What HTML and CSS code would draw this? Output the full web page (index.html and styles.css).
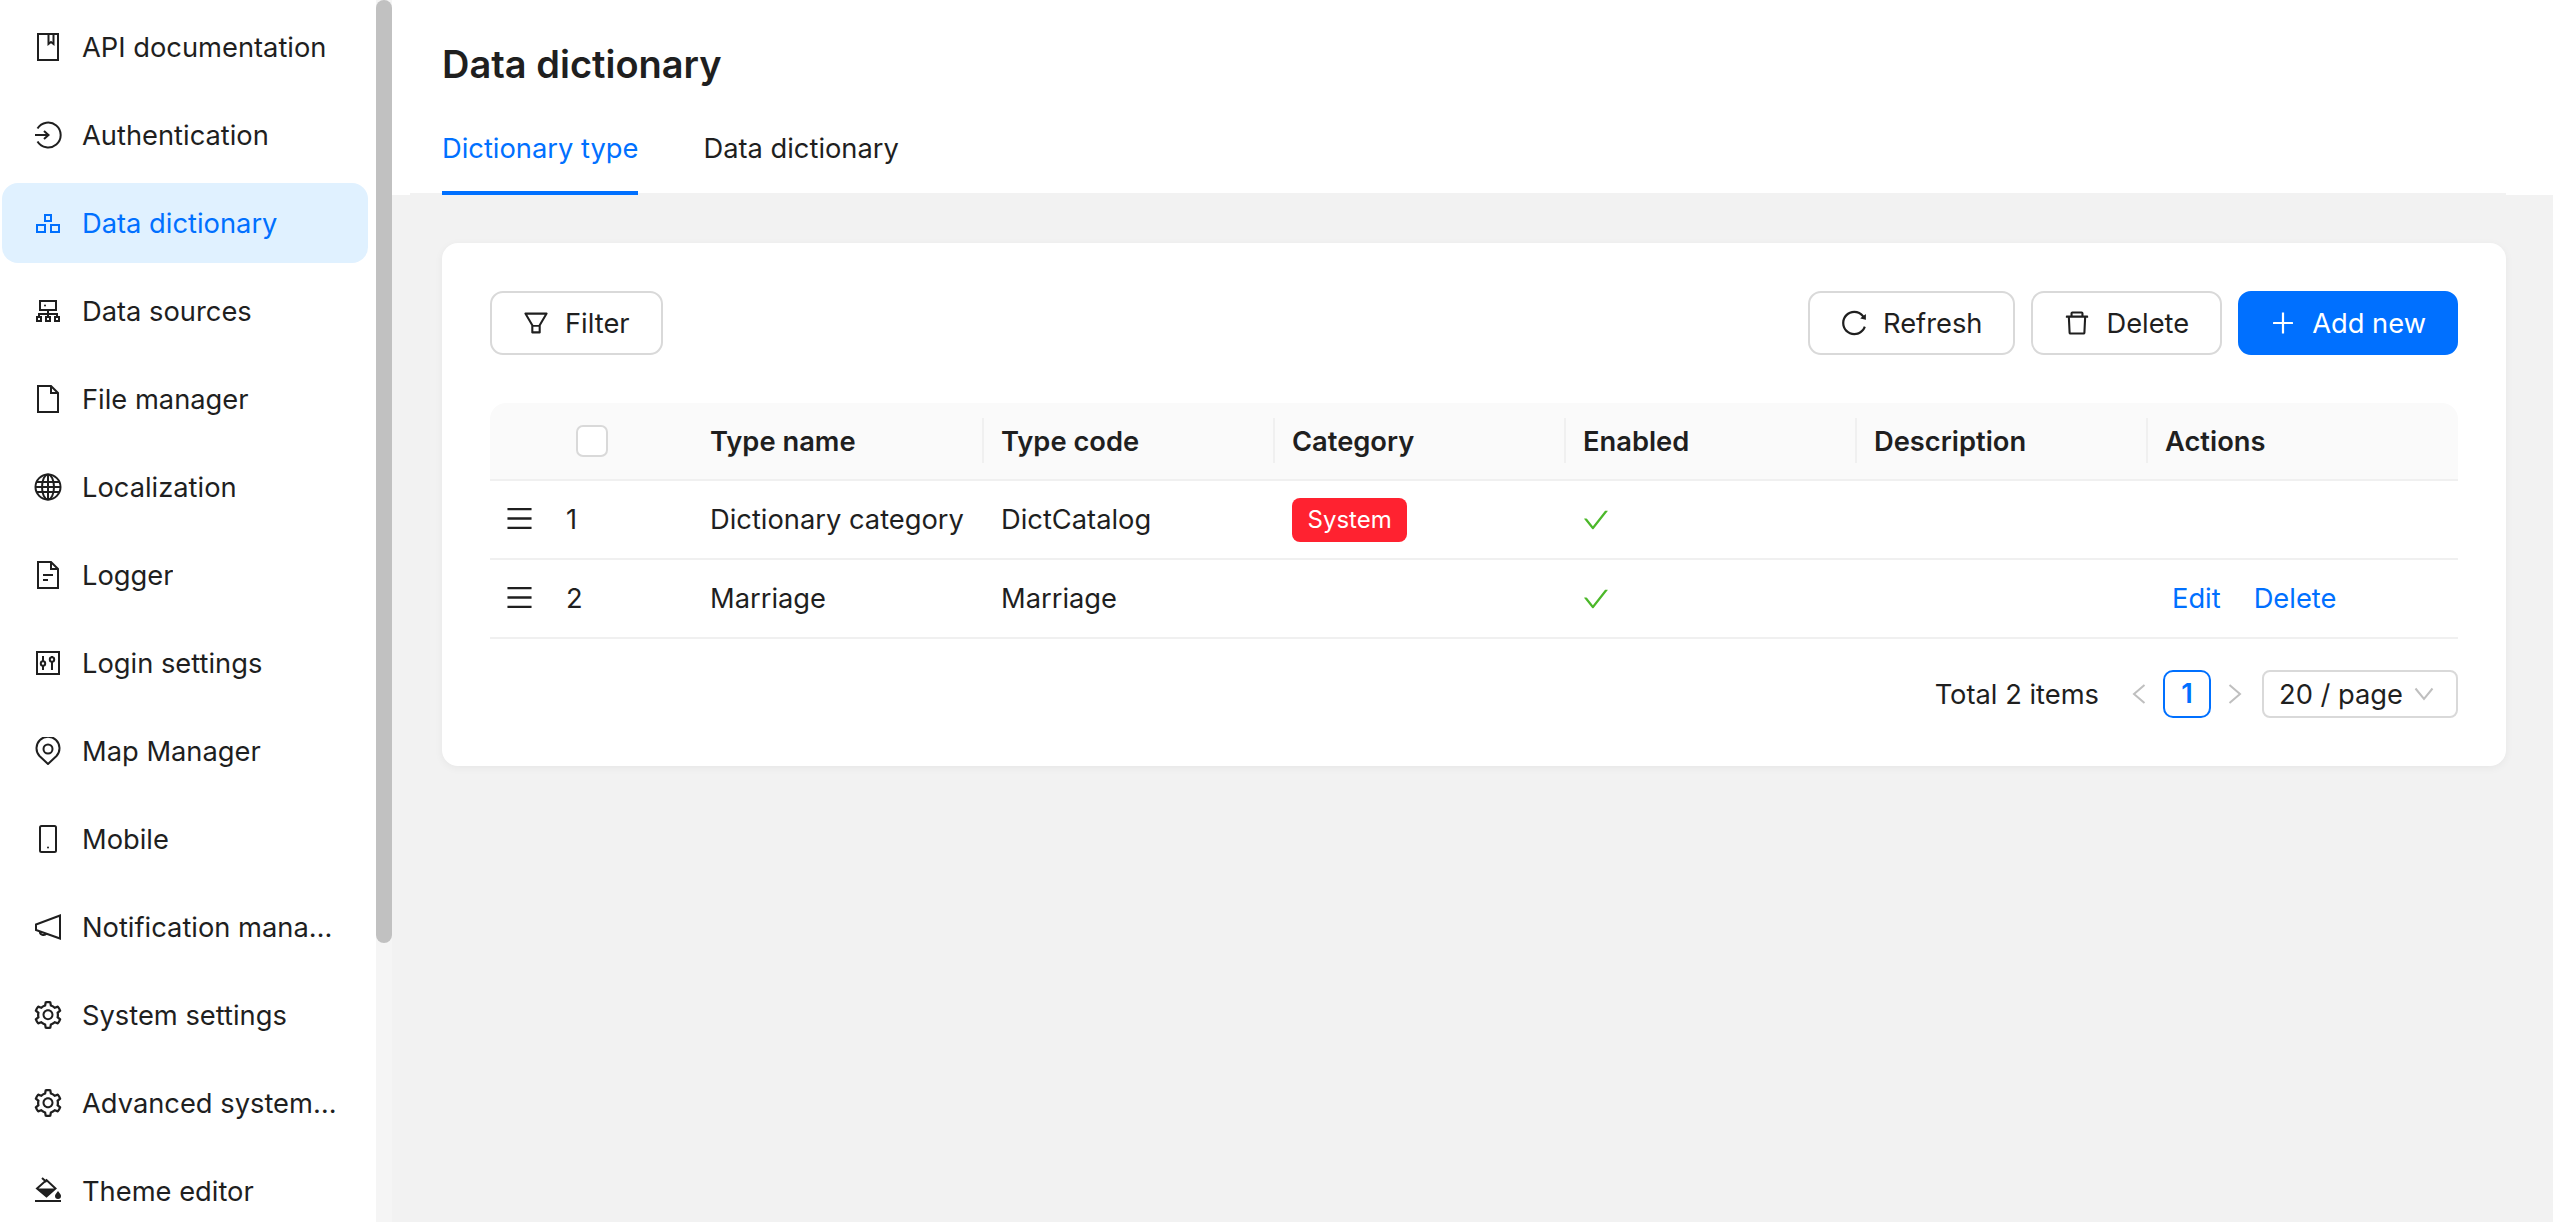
FILE: index.html
```html
<!DOCTYPE html>
<html lang="en">
<head>
    <meta charset="UTF-8">
    <meta name="viewport" content="width=device-width, initial-scale=1.0">
    <title>Data dictionary</title>
    <link rel="stylesheet" href="styles.css">
</head>
<body>
    <aside class="sidebar">
        <nav class="menu">
            <a class="menu-item">
                <svg class="menu-icon" viewBox="0 0 28 28"><rect x="4" y="1" width="20" height="26"/><path d="M14.5 1v10l2.5-2 2.5 2V1"/></svg>
                <span class="menu-label">API documentation</span>
            </a>
            <a class="menu-item">
                <svg class="menu-icon" viewBox="0 0 28 28"><path d="M3.5 7.5A12.5 12.5 0 1 1 3.5 20.500M1 14h13M10 10l4.500 4-4.500 4"/></svg>
                <span class="menu-label">Authentication</span>
            </a>
            <a class="menu-item active">
                <svg class="menu-icon" viewBox="0 0 28 28"><rect x="11" y="6" width="6" height="6"/><rect x="3" y="16" width="8" height="7"/><rect x="17" y="16" width="8" height="7"/></svg>
                <span class="menu-label">Data dictionary</span>
            </a>
            <a class="menu-item">
                <svg class="menu-icon" viewBox="0 0 28 28"><rect x="6" y="4" width="16" height="9"/><path d="M14 13v4M5 20v-3h18v3M14 17v3"/><rect x="3" y="20" width="4" height="4"/><rect x="12" y="20" width="4" height="4"/><rect x="21" y="20" width="4" height="4"/><circle class="solid" cx="11" cy="8.500" r="1"/></svg>
                <span class="menu-label">Data sources</span>
            </a>
            <a class="menu-item">
                <svg class="menu-icon" viewBox="0 0 28 28"><path d="M4 1h13l7 7v19H4zM17 1v7h7"/></svg>
                <span class="menu-label">File manager</span>
            </a>
            <a class="menu-item">
                <svg class="menu-icon" viewBox="0 0 28 28"><circle cx="14" cy="14" r="12.500"/><ellipse cx="14" cy="14" rx="6" ry="12.500"/><path d="M14 1.500v25M2.500 9h23M1.500 14h25M2.500 19h23"/></svg>
                <span class="menu-label">Localization</span>
            </a>
            <a class="menu-item">
                <svg class="menu-icon" viewBox="0 0 28 28"><path d="M4 1h13l7 7v19H4zM17 1v7h7M9 14h10M9 19h5"/></svg>
                <span class="menu-label">Logger</span>
            </a>
            <a class="menu-item">
                <svg class="menu-icon" viewBox="0 0 28 28"><rect x="3" y="3" width="22" height="22"/><path d="M9 7v5M9 17v4M18 7v1.500M18 13v8"/><circle cx="9" cy="14.500" r="2.200"/><circle cx="18" cy="10.500" r="2.200"/></svg>
                <span class="menu-label">Login settings</span>
            </a>
            <a class="menu-item">
                <svg class="menu-icon" viewBox="0 0 28 28"><path d="M14 27l-8.500-8A11.500 11.500 0 1 1 22.500 19z"/><circle cx="14" cy="12" r="4.500"/></svg>
                <span class="menu-label">Map Manager</span>
            </a>
            <a class="menu-item">
                <svg class="menu-icon" viewBox="0 0 28 28"><rect x="6" y="1" width="16" height="26" rx="1.500"/><circle class="solid" cx="14" cy="22.500" r="1"/></svg>
                <span class="menu-label">Mobile</span>
            </a>
            <a class="menu-item">
                <svg class="menu-icon" viewBox="0 0 28 28"><path d="M26 2.500v23L2 17v-5.500zM6 18.500a3.500 3 0 0 0 6.500 2"/></svg>
                <span class="menu-label">Notification manager</span>
            </a>
            <a class="menu-item">
                <svg class="ant-icon" viewBox="64 64 896 896"><path d="M924.800 625.700l-65.500-56c3.100-19 4.700-38.400 4.700-57.800s-1.600-38.800-4.700-57.800l65.500-56a32.030 32.030 0 0 0 9.300-35.200l-.9-2.600a443.740 443.740 0 0 0-79.700-137.900l-1.800-2.100a32.120 32.120 0 0 0-35.100-9.500l-81.300 28.900c-30-24.600-63.500-44-99.700-57.600l-15.700-85a32.050 32.050 0 0 0-25.800-25.700l-2.700-.5c-52.100-9.400-106.900-9.400-159 0l-2.700.5a32.050 32.050 0 0 0-25.800 25.700l-15.800 85.400a351.860 351.860 0 0 0-99 57.400l-81.900-29.100a32 32 0 0 0-35.100 9.500l-1.800 2.100a446.020 446.020 0 0 0-79.700 137.900l-.9 2.600c-4.500 12.500-.8 26.500 9.300 35.200l66.300 56.600c-3.100 18.800-4.600 38-4.600 57.100 0 19.200 1.500 38.400 4.600 57.100L99 625.500a32.030 32.030 0 0 0-9.300 35.200l.9 2.600c18.100 50.400 44.900 96.900 79.700 137.900l1.800 2.100a32.120 32.120 0 0 0 35.100 9.500l81.900-29.100c29.800 24.500 63.100 43.900 99 57.400l15.800 85.400a32.050 32.050 0 0 0 25.800 25.700l2.700.5a449.400 449.400 0 0 0 159 0l2.700-.5a32.050 32.050 0 0 0 25.800-25.700l15.700-85a350 350 0 0 0 99.700-57.600l81.300 28.900a32 32 0 0 0 35.100-9.500l1.800-2.100c34.800-41.100 61.600-87.500 79.700-137.900l.9-2.600c4.500-12.300.8-26.300-9.300-35zM788.300 465.900c2.500 15.100 3.800 30.600 3.800 46.100s-1.300 31-3.800 46.100l-6.600 40.100 74.700 63.900a370.030 370.030 0 0 1-42.600 73.600L721 702.800l-31.400 25.800c-23.900 19.600-50.500 35-79.300 45.800l-38.100 14.300-17.900 97a377.500 377.500 0 0 1-85 0l-17.900-97.200-37.800-14.500c-28.500-10.800-55-26.200-78.700-45.700l-31.400-25.900-93.400 33.200c-17-22.900-31.200-47.600-42.600-73.600l75.500-64.500-6.500-40c-2.400-14.900-3.700-30.300-3.700-45.500 0-15.300 1.200-30.600 3.700-45.500l6.500-40-75.500-64.500c11.300-26.100 25.600-50.700 42.600-73.600l93.400 33.200 31.400-25.900c23.700-19.500 50.200-34.900 78.700-45.700l37.900-14.300 17.900-97.200c28.100-3.200 56.800-3.200 85 0l17.900 97 38.100 14.300c28.700 10.800 55.400 26.200 79.300 45.800l31.400 25.800 92.800-32.900c17 22.900 31.200 47.600 42.600 73.600L781.800 426l6.500 39.900zM512 326c-97.200 0-176 78.800-176 176s78.800 176 176 176 176-78.800 176-176-78.800-176-176-176zm79.200 255.200A111.600 111.600 0 0 1 512 614c-29.900 0-58-11.700-79.200-32.800A111.600 111.600 0 0 1 400 502c0-29.900 11.700-58 32.800-79.200C454 401.600 482.100 390 512 390c29.900 0 58 11.600 79.200 32.800A111.600 111.600 0 0 1 624 502c0 29.900-11.700 58-32.800 79.200z"/></svg>
                <span class="menu-label">System settings</span>
            </a>
            <a class="menu-item">
                <svg class="ant-icon" viewBox="64 64 896 896"><path d="M924.800 625.700l-65.500-56c3.100-19 4.700-38.400 4.700-57.800s-1.600-38.800-4.700-57.800l65.500-56a32.030 32.030 0 0 0 9.300-35.200l-.9-2.600a443.740 443.740 0 0 0-79.700-137.900l-1.800-2.100a32.120 32.120 0 0 0-35.100-9.500l-81.300 28.900c-30-24.600-63.500-44-99.700-57.600l-15.700-85a32.050 32.050 0 0 0-25.800-25.700l-2.700-.5c-52.100-9.400-106.900-9.400-159 0l-2.700.5a32.050 32.050 0 0 0-25.800 25.700l-15.800 85.400a351.860 351.860 0 0 0-99 57.400l-81.900-29.100a32 32 0 0 0-35.100 9.500l-1.800 2.100a446.020 446.020 0 0 0-79.700 137.900l-.9 2.600c-4.500 12.500-.8 26.500 9.300 35.200l66.300 56.600c-3.100 18.800-4.600 38-4.600 57.100 0 19.200 1.500 38.400 4.600 57.100L99 625.500a32.030 32.030 0 0 0-9.300 35.200l.9 2.600c18.100 50.400 44.900 96.900 79.700 137.900l1.800 2.100a32.120 32.120 0 0 0 35.100 9.500l81.900-29.100c29.800 24.500 63.100 43.900 99 57.400l15.800 85.400a32.050 32.050 0 0 0 25.800 25.700l2.700.5a449.400 449.400 0 0 0 159 0l2.700-.5a32.050 32.050 0 0 0 25.800-25.700l15.700-85a350 350 0 0 0 99.700-57.600l81.300 28.900a32 32 0 0 0 35.100-9.500l1.800-2.100c34.800-41.100 61.600-87.500 79.700-137.900l.9-2.600c4.500-12.300.8-26.300-9.300-35zM788.300 465.900c2.500 15.100 3.800 30.600 3.800 46.100s-1.300 31-3.800 46.100l-6.600 40.100 74.700 63.900a370.030 370.030 0 0 1-42.600 73.600L721 702.800l-31.400 25.800c-23.900 19.600-50.500 35-79.300 45.800l-38.100 14.300-17.900 97a377.500 377.500 0 0 1-85 0l-17.900-97.200-37.800-14.500c-28.500-10.800-55-26.200-78.700-45.700l-31.400-25.900-93.400 33.200c-17-22.900-31.200-47.600-42.600-73.600l75.500-64.500-6.500-40c-2.400-14.900-3.700-30.300-3.700-45.500 0-15.300 1.200-30.600 3.700-45.500l6.500-40-75.500-64.500c11.300-26.100 25.600-50.700 42.600-73.600l93.400 33.200 31.400-25.900c23.700-19.500 50.200-34.900 78.700-45.700l37.900-14.300 17.900-97.200c28.100-3.200 56.800-3.200 85 0l17.900 97 38.100 14.300c28.700 10.800 55.400 26.200 79.300 45.800l31.400 25.800 92.800-32.900c17 22.900 31.200 47.600 42.600 73.600L781.800 426l6.500 39.900zM512 326c-97.200 0-176 78.800-176 176s78.800 176 176 176 176-78.800 176-176-78.800-176-176-176zm79.200 255.200A111.600 111.600 0 0 1 512 614c-29.900 0-58-11.700-79.200-32.800A111.600 111.600 0 0 1 400 502c0-29.900 11.700-58 32.800-79.200C454 401.600 482.100 390 512 390c29.900 0 58 11.600 79.200 32.800A111.600 111.600 0 0 1 624 502c0 29.900-11.700 58-32.800 79.200z"/></svg>
                <span class="menu-label">Advanced system settings</span>
            </a>
            <a class="menu-item">
                <svg class="menu-icon" viewBox="0 0 28 28"><path d="M8 1l4.500 4M3 11.500L12.500 3l9 8.500-9 8zM1 24h26"/><path class="solid" d="M3 11.500h18.500l-9 8zM24 14c-2 2.500-3 3.500-3 5a3 3 0 0 0 6 0c0-1.500-1-2.500-3-5z"/></svg>
                <span class="menu-label">Theme editor</span>
            </a>
        </nav>
        <div class="scroll-track"><div class="scroll-thumb"></div></div>
    </aside>

    <main class="content">
        <header class="page-header">
            <h1>Data dictionary</h1>
            <div class="tabs">
                <a class="tab active">Dictionary type</a>
                <a class="tab">Data dictionary</a>
            </div>
        </header>

        <section class="card">
            <div class="toolbar">
                <button class="btn">
                    <svg class="btn-icon" viewBox="64 64 896 896"><path d="M880.100 154H143.900c-24.500 0-39.800 26.700-27.500 48L349 597.400V838c0 17.700 14.200 32 31.800 32h262.400c17.600 0 31.800-14.300 31.800-32V597.400L907.700 202c12.200-21.300-3.100-48-27.600-48zM603.400 798H420.600V642h182.900v156zm9.600-236.600l-9.500 16.600h-183l-9.500-16.600L212.700 226h598.600L613 561.400z"/></svg>
                    Filter
                </button>
                <div class="toolbar-right">
                    <button class="btn">
                        <svg class="btn-icon" viewBox="64 64 896 896"><path d="M909.100 209.300l-56.400 44.100C775.800 155.100 656.200 92 521.900 92 290 92 102.300 279.500 102 511.500 101.700 743.700 289.800 932 521.900 932c181.300 0 335.800-115 394.600-276.100 1.500-4.200-.7-8.900-4.900-10.300l-56.700-19.500a8 8 0 0 0-10.100 4.800c-1.800 5-3.800 10-5.900 14.900-17.300 41-42.100 77.800-73.700 109.400A344.770 344.770 0 0 1 655.900 829c-42.300 17.900-87.400 27-133.800 27-46.500 0-91.500-9.100-133.800-27A341.500 341.500 0 0 1 279 755.200a342.160 342.160 0 0 1-73.700-109.400c-17.900-42.400-27-87.400-27-133.900s9.100-91.500 27-133.900c17.300-41 42.100-77.800 73.700-109.400 31.600-31.600 68.400-56.400 109.300-73.800 42.300-17.900 87.400-27 133.800-27 46.500 0 91.500 9.100 133.800 27a341.500 341.500 0 0 1 109.300 73.800c9.900 9.900 19.200 20.400 27.800 31.400l-60.200 47a8 8 0 0 0 3 14.100l175.600 43c5 1.200 9.900-2.600 9.900-7.700l.8-180.900c-.1-6.600-7.800-10.300-13-6.200z"/></svg>
                        Refresh
                    </button>
                    <button class="btn">
                        <svg class="btn-icon" viewBox="64 64 896 896"><path d="M360 184h-8c4.400 0 8-3.600 8-8v8h304v-8c0 4.400 3.600 8 8 8h-8v72h72v-80c0-35.300-28.700-64-64-64H352c-35.300 0-64 28.700-64 64v80h72v-72zm504 72H160c-17.700 0-32 14.300-32 32v32c0 4.400 3.600 8 8 8h60.400l24.700 523c1.600 34.100 29.800 61 63.900 61h454c34.200 0 62.300-26.800 63.900-61l24.700-523H888c4.400 0 8-3.600 8-8v-32c0-17.700-14.300-32-32-32zM731.300 840H292.700l-24.200-512h487l-24.200 512z"/></svg>
                        Delete
                    </button>
                    <button class="btn btn-primary">
                        <svg class="btn-icon" viewBox="64 64 896 896"><path d="M482 152h60q8 0 8 8v704q0 8-8 8h-60q-8 0-8-8V160q0-8 8-8z"/><path d="M176 474h672q8 0 8 8v60q0 8-8 8H176q-8 0-8-8v-60q0-8 8-8z"/></svg>
                        Add new
                    </button>
                </div>
            </div>

            <table class="data-table">
                <colgroup>
                    <col class="col-drag">
                    <col class="col-index">
                    <col class="col-data">
                    <col class="col-data">
                    <col class="col-data">
                    <col class="col-data">
                    <col class="col-data">
                    <col class="col-actions">
                </colgroup>
                <thead>
                    <tr>
                        <th colspan="2" class="check-cell"><span class="checkbox"></span></th>
                        <th class="divided">Type name</th>
                        <th class="divided">Type code</th>
                        <th class="divided">Category</th>
                        <th class="divided">Enabled</th>
                        <th class="divided">Description</th>
                        <th>Actions</th>
                    </tr>
                </thead>
                <tbody>
                    <tr>
                        <td class="drag-cell"><svg class="drag-icon" viewBox="64 64 896 896"><path d="M904 160H120c-4.400 0-8 3.600-8 8v64c0 4.400 3.600 8 8 8h784c4.400 0 8-3.600 8-8v-64c0-4.400-3.600-8-8-8zm0 624H120c-4.400 0-8 3.600-8 8v64c0 4.400 3.600 8 8 8h784c4.400 0 8-3.600 8-8v-64c0-4.400-3.600-8-8-8zm0-312H120c-4.400 0-8 3.600-8 8v64c0 4.400 3.600 8 8 8h784c4.400 0 8-3.600 8-8v-64c0-4.400-3.600-8-8-8z"/></svg></td>
                        <td class="index-cell">1</td>
                        <td>Dictionary category</td>
                        <td>DictCatalog</td>
                        <td><span class="tag">System</span></td>
                        <td><svg class="check-icon" viewBox="64 64 896 896"><path d="M912 190h-69.900c-9.800 0-19.100 4.500-25.100 12.200L404.700 724.500 207 474a32 32 0 0 0-25.100-12.200H112c-6.700 0-10.400 7.700-6.300 12.900l273.900 347c12.800 16.200 37.400 16.200 50.300 0l488.400-618.900c4.100-5.100.4-12.800-6.300-12.800z"/></svg></td>
                        <td></td>
                        <td></td>
                    </tr>
                    <tr>
                        <td class="drag-cell"><svg class="drag-icon" viewBox="64 64 896 896"><path d="M904 160H120c-4.400 0-8 3.600-8 8v64c0 4.400 3.600 8 8 8h784c4.400 0 8-3.600 8-8v-64c0-4.400-3.600-8-8-8zm0 624H120c-4.400 0-8 3.600-8 8v64c0 4.400 3.600 8 8 8h784c4.400 0 8-3.600 8-8v-64c0-4.400-3.600-8-8-8zm0-312H120c-4.400 0-8 3.600-8 8v64c0 4.400 3.600 8 8 8h784c4.400 0 8-3.600 8-8v-64c0-4.400-3.600-8-8-8z"/></svg></td>
                        <td class="index-cell">2</td>
                        <td>Marriage</td>
                        <td>Marriage</td>
                        <td></td>
                        <td><svg class="check-icon" viewBox="64 64 896 896"><path d="M912 190h-69.900c-9.800 0-19.100 4.500-25.100 12.200L404.700 724.500 207 474a32 32 0 0 0-25.100-12.200H112c-6.700 0-10.400 7.700-6.300 12.900l273.900 347c12.800 16.200 37.400 16.200 50.300 0l488.400-618.900c4.100-5.100.4-12.800-6.300-12.800z"/></svg></td>
                        <td></td>
                        <td><div class="row-actions"><a class="link">Edit</a><a class="link">Delete</a></div></td>
                    </tr>
                </tbody>
            </table>

            <div class="pagination">
                <span class="total">Total 2 items</span>
                <span class="page-arrow"><svg class="arrow-icon" viewBox="0 0 14 22"><path d="M12.500 2L2 11l10.500 9"/></svg></span>
                <span class="page-num">1</span>
                <span class="page-arrow"><svg class="arrow-icon" viewBox="0 0 14 22"><path d="M1.500 2L12 11 1.500 20"/></svg></span>
                <div class="page-size">
                    <span>20 / page</span>
                    <svg class="select-arrow" viewBox="0 0 20 14"><path d="M1.500 1.500L10 12l8.500-10.500"/></svg>
                </div>
            </div>
        </section>
    </main>
</body>
</html>
```

FILE: styles.css
```css
:root {
    --primary-color: #0070ff;
    --active-bg: #e0f1ff;
    --text-color: #1f1f1f;
    --border-color: #d9d9d9;
    --line-color: #f0f0f0;
    --page-bg: #f2f2f2;
}

* {
    margin: 0;
    padding: 0;
    box-sizing: border-box;
    font-family: 'Inter', 'Liberation Sans', sans-serif;
}

body {
    display: flex;
    height: 100vh;
    overflow: hidden;
    background-color: var(--page-bg);
    color: var(--text-color);
    font-size: 27.300px;
}

/* Sidebar */
.sidebar {
    display: flex;
    flex: 0 0 392px;
    height: 100%;
    overflow: hidden;
}

.menu {
    flex: 0 0 376px;
    height: 100%;
    padding: 7px 8px 0 2px;
    background-color: white;
    overflow: hidden;
}

.menu-item {
    display: flex;
    align-items: center;
    gap: 20px;
    height: 80px;
    margin-bottom: 8px;
    padding: 0 26px 0 32px;
    border-radius: 16px;
}

.menu-item.active {
    background-color: var(--active-bg);
    color: var(--primary-color);
}

.menu-icon {
    flex: 0 0 28px;
    width: 28px;
    height: 28px;
    fill: none;
    stroke: currentColor;
    stroke-width: 2;
}

.menu-icon .solid {
    fill: currentColor;
    stroke: none;
}

.ant-icon {
    flex: 0 0 28px;
    width: 28px;
    height: 28px;
    fill: currentColor;
}

.menu-label {
    overflow: hidden;
    white-space: nowrap;
    text-overflow: ellipsis;
}

.scroll-track {
    flex: 0 0 16px;
    height: 100%;
    background-color: #f5f5f5;
}

.scroll-thumb {
    height: 943px;
    background-color: #c1c1c1;
    border-radius: 8px;
}

/* Main content */
.content {
    flex: 1;
    min-width: 0;
}

.page-header {
    height: 195px;
    padding-top: 40px;
    background-color: white;
}

h1 {
    height: 48px;
    margin: 0 0 39px 50px;
    font-size: 38px;
    font-weight: 600;
    line-height: 48px;
}

.tabs {
    display: flex;
    gap: 65px;
    height: 68px;
    margin: 0 47px 0 18px;
    padding-left: 32px;
    border-bottom: 2px solid var(--page-bg);
}

.tab {
    height: 68px;
    line-height: 44px;
    border-bottom: 4px solid transparent;
}

.tab.active {
    color: var(--primary-color);
    border-bottom-color: var(--primary-color);
}

.card {
    margin: 48px 47px 0 50px;
    padding: 48px;
    background-color: white;
    border-radius: 16px;
    box-shadow: 0 2px 8px rgba(0, 0, 0, 0.05);
}

.toolbar {
    display: flex;
    justify-content: space-between;
    margin-bottom: 48px;
}

.toolbar-right {
    display: flex;
    gap: 16px;
}

.btn {
    display: flex;
    align-items: center;
    gap: 16px;
    height: 64px;
    padding: 0 31px;
    border: 2px solid var(--border-color);
    border-radius: 13px;
    background-color: white;
    color: var(--text-color);
    font-size: 27.300px;
}

.btn-primary {
    padding: 0 30px;
    border-color: var(--primary-color);
    background-color: var(--primary-color);
    color: white;
}

.btn-icon {
    width: 26px;
    height: 26px;
    fill: currentColor;
}

/* Table */
.data-table {
    width: 100%;
    table-layout: fixed;
    border-collapse: separate;
    border-spacing: 0;
}

.col-drag {
    width: 60px;
}

.col-index {
    width: 143px;
}

.col-data {
    width: 291px;
}

.data-table th {
    position: relative;
    height: 78px;
    padding: 0 17px;
    background-color: #fafafa;
    border-bottom: 2px solid var(--line-color);
    font-weight: 600;
    text-align: left;
}

.data-table th:first-child {
    border-top-left-radius: 16px;
}

.data-table th:last-child {
    border-top-right-radius: 16px;
}

.data-table th.divided::after {
    content: "";
    position: absolute;
    top: 15px;
    right: 0;
    width: 2px;
    height: 45px;
    background-color: var(--line-color);
}

.data-table th.check-cell {
    padding: 0;
    text-align: center;
}

.checkbox {
    display: inline-block;
    width: 32px;
    height: 32px;
    margin-top: 6px;
    background-color: white;
    border: 2px solid var(--border-color);
    border-radius: 7px;
}

.data-table td {
    height: 79px;
    padding: 0 17px;
    border-bottom: 2px solid var(--line-color);
    white-space: nowrap;
}

.data-table td.drag-cell {
    padding: 4px 0 0 16px;
}

.data-table td.index-cell {
    padding-left: 16px;
}

.drag-icon {
    width: 27px;
    height: 27px;
    fill: currentColor;
}

.check-icon {
    display: block;
    width: 26px;
    height: 26px;
    fill: #4cb82a;
}

.tag {
    display: inline-block;
    height: 44px;
    padding: 0 15.500px;
    background-color: #ff2230;
    border-radius: 8px;
    color: white;
    font-size: 24px;
    line-height: 44px;
}

.row-actions {
    display: flex;
    gap: 33px;
    padding-left: 7px;
}

.link {
    color: var(--primary-color);
}

/* Pagination */
.pagination {
    display: flex;
    justify-content: flex-end;
    align-items: center;
    margin-top: 31px;
}

.total {
    margin-right: 16px;
}

.page-arrow {
    display: flex;
    justify-content: center;
    align-items: center;
    width: 48px;
    height: 48px;
}

.arrow-icon {
    width: 14px;
    height: 22px;
    fill: none;
    stroke: #bfbfbf;
    stroke-width: 2;
}

.page-num {
    width: 48px;
    height: 48px;
    border: 2px solid var(--primary-color);
    border-radius: 10px;
    color: var(--primary-color);
    font-weight: 600;
    line-height: 44px;
    text-align: center;
}

.page-size {
    display: flex;
    justify-content: space-between;
    align-items: center;
    width: 196px;
    height: 48px;
    margin-left: 3px;
    padding: 0 22px 0 15px;
    border: 2px solid var(--border-color);
    border-radius: 8px;
}

.select-arrow {
    width: 20px;
    height: 14px;
    fill: none;
    stroke: #bfbfbf;
    stroke-width: 2;
}
```
